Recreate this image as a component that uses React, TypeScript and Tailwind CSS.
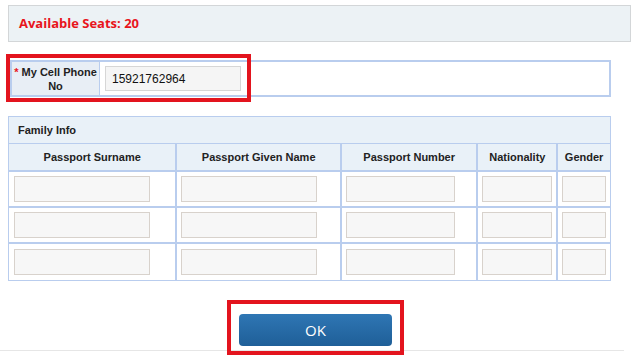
import React from 'react';

const cols = [
	{ title: 'Passport Surname', w: 'w-[167px]', input: 'w-[136px]' },
	{ title: 'Passport Given Name', w: 'w-[165px]', input: 'w-[136px]' },
	{ title: 'Passport Number', w: 'w-[137px]', input: 'w-[109px]' },
	{ title: 'Nationality', w: 'w-[80px]', input: 'w-[70px]' },
	{ title: 'Gender', w: 'w-[54px]', input: 'w-[44px]' },
];

const App = () => {
	return (
		<div className="relative w-[640px] h-[357px] bg-white font-['Liberation_Sans',Arial,sans-serif] text-[#333] overflow-hidden">
			<div className="pt-[5px] pl-[8px]">
				<div className="w-[623px] h-[37px] border border-[#d3d6d8] bg-[#ecf2f5] flex items-center pl-[10px]">
					<span className="text-[13px] font-bold text-[#e8141c] font-['Open_Sans',sans-serif]">Available Seats: 20</span>
				</div>
			</div>

			<div className="mt-[18px] ml-[10px] w-[601px] h-[37px] border-2 border-[#b9cdee] flex">
				<div className="w-[88px] bg-[#e8eef5] border-r border-[#b9cdee] flex items-center justify-center text-center text-[11px] font-bold leading-[14px] text-[#222]">
					<span>
						<span className="text-[#e8141c]">* </span>My Cell Phone
						<br />
						No
					</span>
				</div>
				<div className="flex items-center pl-[5px]">
					<div className="w-[136px] h-[25px] border border-[#d6d6d6] bg-[#f5f5f5] flex items-center pl-[6px] text-[12px] text-[#111]">
						15921762964
					</div>
				</div>
			</div>

			<div className="mt-[19px] ml-[8px] w-[603px] border border-[#b9cdee]">
				<div className="h-[27px] bg-[#e9f1f8] border-b border-[#b9cdee] flex items-center pl-[9px] text-[11px] font-bold text-[#222]">
					Family Info
				</div>
				<div className="flex h-[28px] bg-[#e9f1f8] border-b-2 border-[#b9cdee]">
					{cols.map((c, i) => (
						<div key={c.title} className={`${c.w} flex items-center justify-center text-[11px] font-bold text-[#222] ${i > 0 ? 'border-l-2 border-[#b9cdee]' : ''}`}>
							{c.title}
						</div>
					))}
				</div>
				{[0, 1, 2].map((r) => (
					<div key={r} className={`flex h-[36px] ${r < 2 ? 'border-b-2 border-[#b9cdee]' : ''}`}>
						{cols.map((c, i) => (
							<div key={c.title} className={`${c.w} flex items-center ${i > 0 ? 'border-l-2 border-[#b9cdee] pl-[4px]' : 'pl-[5px]'}`}>
								<div className={`${c.input} h-[26px] border border-[#d8d2cc] bg-[#f7f7f7]`} />
							</div>
						))}
					</div>
				))}
			</div>

			<div className="mt-[33px] flex pl-[239px]">
				<button className="w-[153px] h-[32px] rounded-[4px] bg-gradient-to-b from-[#2f76b4] to-[#1f5f98] text-white text-[15px] font-['Open_Sans',sans-serif]">
					OK
				</button>
			</div>

			<div className="absolute left-0 top-[350px] w-[624px] h-px bg-[#e6e6e6]" />

			<div className="absolute left-[6px] top-[54px] w-[245px] h-[48px] border-[4px] border-[#e3141e]" />
			<div className="absolute left-[227px] top-[300px] w-[177px] h-[55px] border-[4px] border-[#e3141e]" />
		</div>
	);
};

export default App;
